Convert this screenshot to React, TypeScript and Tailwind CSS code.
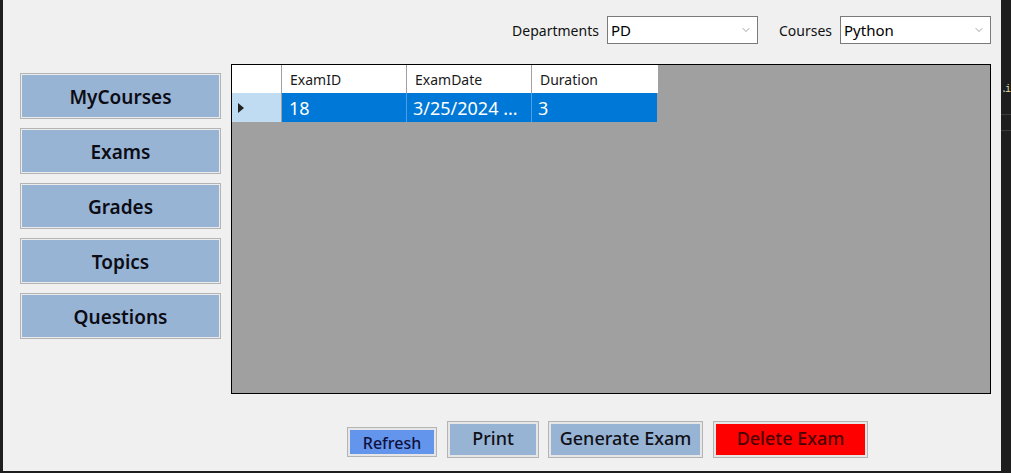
import { ChevronDown } from "lucide-react";

const NAV = ["MyCourses", "Exams", "Grades", "Topics", "Questions"];

function Select({ value }: { value: string }) {
  return (
    <div className="flex h-[28px] w-[151px] items-center justify-between border border-[#7a7a7a] bg-white pl-[3px] pr-[5px]">
      <span className="text-[15px] leading-none text-black">{value}</span>
      <ChevronDown size={12} strokeWidth={1.2} className="text-[#606060]" />
    </div>
  );
}

function NavButton({ label }: { label: string }) {
  return (
    <button
      type="button"
      className="flex h-[46px] w-full items-center justify-center border border-[#b4b4b4] bg-[#98b4d4] pt-[2px] text-[19px] font-semibold text-[#0c0c14] shadow-[inset_0_0_0_1px_#ececec]"
    >
      {label}
    </button>
  );
}

export default function App() {
  return (
    <div
      className="flex h-[473px] w-[1011px] flex-col overflow-hidden bg-[#1e1e1e]"
      style={{ fontFamily: '"Noto Sans", "Open Sans", sans-serif' }}
    >
      <div className="flex h-[471px]">
        <div className="w-[3px] bg-[#1f1f1f]" />

        <div className="flex flex-1 flex-col bg-[#f0f0f0] pt-[16px]">
          {/* filters */}
          <div className="flex items-center justify-end pr-[10px] text-[14px] text-[#111]">
            <span className="mr-[8px]">Departments</span>
            <Select value="PD" />
            <span className="ml-[21px] mr-[8px]">Courses</span>
            <Select value="Python" />
          </div>

          <div className="mt-[20px] flex pl-[17px]">
            <div className="mt-[9px] flex w-[201px] flex-col gap-[9px]">
              {NAV.map((n) => (
                <NavButton key={n} label={n} />
              ))}
            </div>

            {/* data grid */}
            <div className="ml-[10px] h-[330px] w-[760px] border border-black bg-[#a0a0a0]">
              <div className="flex h-[28px] w-[426px] bg-white text-[14px] text-[#1a1a1a]">
                <div className="w-[50px] border-r border-[#a0a0a0]" />
                <div className="flex w-[125px] items-center border-r border-[#a0a0a0] pl-[8px]">ExamID</div>
                <div className="flex w-[125px] items-center border-r border-[#a0a0a0] pl-[8px]">ExamDate</div>
                <div className="flex w-[125px] items-center pl-[8px]">Duration</div>
              </div>
              <div className="flex h-[29px] w-[426px] text-[18px] text-white">
                <div className="flex w-[50px] items-center border-r border-[#a0a0a0] bg-[#bfdcf3] pl-[6px]">
                  <svg width="6" height="10" viewBox="0 0 6 10">
                    <path d="M0 0 L6 5 L0 10 Z" fill="#222" />
                  </svg>
                </div>
                <div className="flex w-[125px] items-center border-r border-[#4aa0e6] bg-[#0078d7] pl-[7px] pt-[2px]">18</div>
                <div className="flex w-[125px] items-center border-r border-[#4aa0e6] bg-[#0078d7] pl-[6px] pt-[2px]">3/25/2024 ...</div>
                <div className="flex w-[125px] items-center bg-[#0078d7] pl-[6px] pt-[2px]">3</div>
              </div>
            </div>
          </div>

          {/* actions */}
          <div className="mt-[27px] flex items-end gap-[9px] pl-[344px] text-[18px] font-medium">
            <button
              type="button"
              className="mb-[1px] h-[30px] w-[90px] border border-[#b4b4b4] bg-[#6495ed] pt-[2px] text-[16px] text-[#101040] shadow-[inset_0_0_0_2px_#e6e6e6]"
            >
              Refresh
            </button>
            <button
              type="button"
              className="ml-[1px] h-[37px] w-[92px] border border-[#b4b4b4] bg-[#98b4d4] pb-[3px] text-[#101018] shadow-[inset_0_0_0_2px_#e6e6e6]"
            >
              Print
            </button>
            <button
              type="button"
              className="h-[37px] w-[155px] border border-[#b4b4b4] bg-[#98b4d4] pb-[3px] text-[#101018] shadow-[inset_0_0_0_2px_#e6e6e6]"
            >
              Generate Exam
            </button>
            <button
              type="button"
              className="ml-[1px] h-[37px] w-[155px] border border-[#b4b4b4] bg-[#ff0000] pb-[3px] text-[#4a0000] shadow-[inset_0_0_0_2px_#e6e6e6]"
            >
              Delete Exam
            </button>
          </div>
        </div>

        {/* editor edge on the right */}
        <div className="flex w-[10px] flex-col overflow-hidden bg-[#1e1e1e]">
          <span className="mt-[82px] font-mono text-[10px] leading-[16px] tracking-[-2px] text-[#dcdcaa]">.i</span>
          <div className="mt-[16px] h-px bg-[#3c3c3c]" />
          <div className="mt-[15px] h-px bg-[#3c3c3c]" />
        </div>
      </div>
    </div>
  );
}
